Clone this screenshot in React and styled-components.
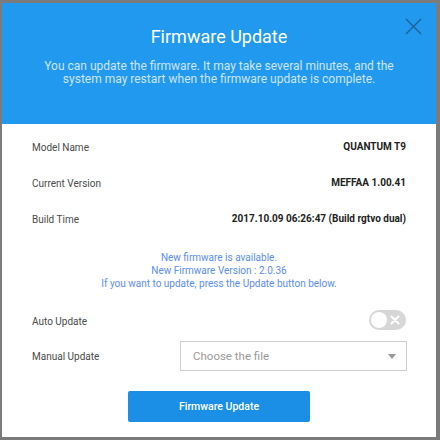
import React from 'react';
import styled, { createGlobalStyle } from 'styled-components';

const GlobalStyle = createGlobalStyle`
  html, body {
    margin: 0;
    padding: 0;
    background: #7b7b7b;
  }
  body {
    font-family: Roboto, "Noto Sans", "Liberation Sans", sans-serif;
  }
`;

const Backdrop = styled.div`
  width: 440px;
  height: 440px;
  background: #7b7b7b;
  padding: 3px 4px 3px 2px;
  box-sizing: border-box;
`;

const Dialog = styled.div`
  position: relative;
  width: 434px;
  height: 434px;
  background: #fff;
  display: flex;
  flex-direction: column;
`;

const Header = styled.div`
  background: #2199ee;
  height: 122px;
  box-sizing: border-box;
  padding: 23px 20px 0;
  text-align: center;
`;

const Title = styled.h1`
  margin: 0 0 12px;
  font-size: 18px;
  line-height: 22px;
  font-weight: 400;
  color: #fff;
`;

const Desc = styled.p`
  margin: 0;
  font-size: 12px;
  line-height: 13px;
  color: #cde4fa;
`;

const Close = styled.button`
  position: absolute;
  top: 12px;
  right: 11px;
  width: 23px;
  height: 23px;
  padding: 0;
  border: none;
  background: transparent;
  display: flex;
  align-items: center;
  justify-content: center;
`;

const Body = styled.div`
  padding: 5px 30px 15px 30px;
  display: flex;
  flex-direction: column;
`;

const InfoRow = styled.div`
  height: 36px;
  display: flex;
  align-items: center;
  justify-content: space-between;
`;

const Label = styled.span`
  font-size: 10px;
  color: #4a4a4a;
`;

const Value = styled.span`
  font-size: 10px;
  font-weight: 700;
  color: #222;
  margin-top: -2px;
`;

const Notice = styled.div`
  margin: 14px 0 16px;
  text-align: center;
  font-size: 10px;
  line-height: 13px;
  color: #5c8cf0;
`;

const FormRow = styled.div`
  height: 30px;
  display: flex;
  align-items: center;
  justify-content: space-between;
  & + & {
    margin-top: 5px;
  }
`;

const Toggle = styled.div`
  position: relative;
  width: 37px;
  height: 20px;
  border-radius: 10px;
  background: #d6d6d6;
  margin-top: -2px;
`;

const Knob = styled.span`
  position: absolute;
  top: 2px;
  left: 2px;
  width: 16px;
  height: 16px;
  border-radius: 50%;
  background: #fff;
`;

const ToggleMark = styled.svg`
  position: absolute;
  top: 5px;
  right: 6px;
`;

const Select = styled.div`
  width: 227px;
  height: 30px;
  box-sizing: border-box;
  border: 1px solid #cfcfcf;
  padding: 0 10px 0 12px;
  display: flex;
  align-items: center;
  justify-content: space-between;
  font-size: 11.5px;
  color: #9a9a9a;
  margin-right: -1px;
`;

const Caret = styled.span`
  width: 0;
  height: 0;
  border-left: 4px solid transparent;
  border-right: 4px solid transparent;
  border-top: 5px solid #9a9a9a;
  margin-top: 1px;
`;

const Submit = styled.button`
  align-self: center;
  margin-top: 20px;
  width: 182px;
  height: 31px;
  border: none;
  border-radius: 2px;
  background: #1b8fe6;
  color: #fff;
  font-family: inherit;
  font-size: 10.5px;
  font-weight: 500;
`;

const rows = [
  ['Model Name', 'QUANTUM T9'],
  ['Current Version', 'MEFFAA 1.00.41'],
  ['Build Time', '2017.10.09 06:26:47 (Build rgtvo dual)'],
];

function App() {
  return (
    <>
      <GlobalStyle />
      <Backdrop>
        <Dialog>
          <Header>
            <Title>Firmware Update</Title>
            <Desc>
              You can update the firmware. It may take several minutes, and the
              <br />
              system may restart when the firmware update is complete.
            </Desc>
          </Header>
          <Close aria-label="close">
            <svg width="17" height="17" viewBox="0 0 17 17">
              <path d="M1 1L16 16M16 1L1 16" stroke="#1c5f95" strokeWidth="1.3" fill="none" />
            </svg>
          </Close>
          <Body>
            {rows.map(([k, v]) => (
              <InfoRow key={k}>
                <Label>{k}</Label>
                <Value>{v}</Value>
              </InfoRow>
            ))}
            <Notice>
              New firmware is available.
              <br />
              New Firmware Version : 2.0.36
              <br />
              If you want to update, press the Update button below.
            </Notice>
            <FormRow>
              <Label>Auto Update</Label>
              <Toggle>
                <Knob />
                <ToggleMark width="10" height="10" viewBox="0 0 10 10">
                  <path d="M1.5 1.5L8.5 8.5M8.5 1.5L1.5 8.5" stroke="#fff" strokeWidth="2" strokeLinecap="round" />
                </ToggleMark>
              </Toggle>
            </FormRow>
            <FormRow>
              <Label>Manual Update</Label>
              <Select>
                <span>Choose the file</span>
                <Caret />
              </Select>
            </FormRow>
            <Submit>Firmware Update</Submit>
          </Body>
        </Dialog>
      </Backdrop>
    </>
  );
}

export default App;
